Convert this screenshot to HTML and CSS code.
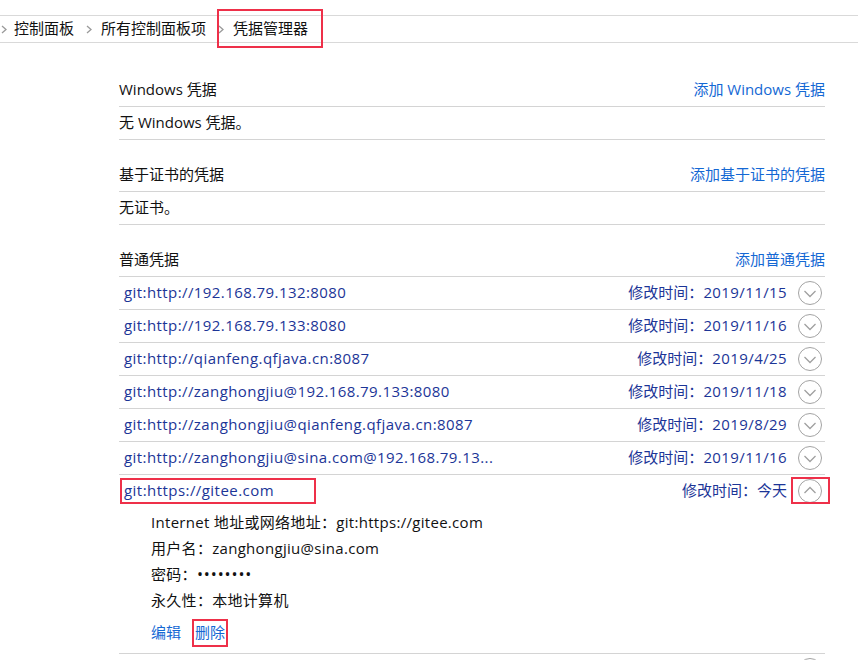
FILE: index.html
```html
<!DOCTYPE html>
<html lang="zh-CN">
<head>
<meta charset="utf-8">
<title>凭据管理器</title>
<link rel="stylesheet" href="styles.css">
</head>
<body>
<nav class="crumbs">
  <svg class="sep first" viewBox="0 0 6 9" width="6" height="9"><path d="M1 1 L5 4.5 L1 8" /></svg>
  <span class="crumb">控制面板</span>
  <svg class="sep" viewBox="0 0 6 9" width="6" height="9"><path d="M1 1 L5 4.5 L1 8" /></svg>
  <span class="crumb">所有控制面板项</span>
  <svg class="sep" viewBox="0 0 6 9" width="6" height="9"><path d="M1 1 L5 4.5 L1 8" /></svg>
  <span class="crumb current">凭据管理器</span>
</nav>

<main class="main">
  <section class="section">
    <div class="sec-head"><span class="txt">Windows 凭据</span><a class="link txt">添加 Windows 凭据</a></div>
    <div class="sec-empty"><span class="txt">无 Windows 凭据。</span></div>
  </section>

  <section class="section">
    <div class="sec-head"><span class="txt">基于证书的凭据</span><a class="link txt">添加基于证书的凭据</a></div>
    <div class="sec-empty"><span class="txt">无证书。</span></div>
  </section>

  <section class="section">
    <div class="sec-head"><span class="txt">普通凭据</span><a class="link txt">添加普通凭据</a></div>

    <div class="cred">
      <div class="cred-head"><span class="cred-name txt">git:http://192.168.79.132:8080</span><span class="cred-date txt">修改时间：<span class="num">2019/11/15</span></span><svg class="toggle" viewBox="0 0 24 24"><circle cx="12" cy="12" r="11.5"/><path d="M6.5 10 L12 15.5 L17.5 10"/></svg></div>
    </div>
    <div class="cred">
      <div class="cred-head"><span class="cred-name txt">git:http://192.168.79.133:8080</span><span class="cred-date txt">修改时间：<span class="num">2019/11/16</span></span><svg class="toggle" viewBox="0 0 24 24"><circle cx="12" cy="12" r="11.5"/><path d="M6.5 10 L12 15.5 L17.5 10"/></svg></div>
    </div>
    <div class="cred">
      <div class="cred-head"><span class="cred-name txt">git:http://qianfeng.qfjava.cn:8087</span><span class="cred-date txt">修改时间：<span class="num">2019/4/25</span></span><svg class="toggle" viewBox="0 0 24 24"><circle cx="12" cy="12" r="11.5"/><path d="M6.5 10 L12 15.5 L17.5 10"/></svg></div>
    </div>
    <div class="cred">
      <div class="cred-head"><span class="cred-name txt">git:http://zanghongjiu@192.168.79.133:8080</span><span class="cred-date txt">修改时间：<span class="num">2019/11/18</span></span><svg class="toggle" viewBox="0 0 24 24"><circle cx="12" cy="12" r="11.5"/><path d="M6.5 10 L12 15.5 L17.5 10"/></svg></div>
    </div>
    <div class="cred">
      <div class="cred-head"><span class="cred-name txt">git:http://zanghongjiu@qianfeng.qfjava.cn:8087</span><span class="cred-date txt">修改时间：<span class="num">2019/8/29</span></span><svg class="toggle" viewBox="0 0 24 24"><circle cx="12" cy="12" r="11.5"/><path d="M6.5 10 L12 15.5 L17.5 10"/></svg></div>
    </div>
    <div class="cred">
      <div class="cred-head"><span class="cred-name txt">git:http://zanghongjiu@sina.com@192.168.79.13...</span><span class="cred-date txt">修改时间：<span class="num">2019/11/16</span></span><svg class="toggle" viewBox="0 0 24 24"><circle cx="12" cy="12" r="11.5"/><path d="M6.5 10 L12 15.5 L17.5 10"/></svg></div>
    </div>

    <div class="cred open">
      <div class="cred-head"><span class="cred-name"><span class="name-box">git:https://gitee.com</span></span><span class="cred-date txt">修改时间：今天</span><span class="toggle-wrap"><svg class="toggle" viewBox="0 0 24 24"><circle cx="12" cy="12" r="11.5"/><path d="M6.5 14 L12 8.5 L17.5 14"/></svg></span></div>
      <div class="details">
        <div>Internet 地址或网络地址：git:https://gitee.com</div>
        <div>用户名：zanghongjiu@sina.com</div>
        <div>密码：<span class="dots">••••••••</span></div>
        <div>永久性：本地计算机</div>
        <div class="actions"><a class="link">编辑</a><a class="link marked">删除</a></div>
      </div>
    </div>

    <div class="cred">
      <div class="cred-head"><span class="cred-name"></span><svg class="toggle" viewBox="0 0 24 24"><circle cx="12" cy="12" r="11.5"/><path d="M6.5 10 L12 15.5 L17.5 10"/></svg></div>
    </div>
  </section>
</main>
</body>
</html>
```

FILE: styles.css
```css
html, body {
  margin: 0;
  padding: 0;
  background: #ffffff;
}

body {
  font-family: "Open Sans", "Noto Sans CJK SC", sans-serif;
  font-size: 15px;
  color: #111111;
  overflow: hidden;
}

.crumbs {
  margin-top: 15px;
  height: 26px;
  border-top: 1px solid #d9d9d9;
  border-bottom: 1px solid #d9d9d9;
  display: flex;
  align-items: center;
}

.crumbs .sep {
  flex: none;
  margin: 0 9px 0 12px;
}

.crumbs .sep.first {
  margin: 0 7px 0 1px;
}

.crumbs .sep path {
  fill: none;
  stroke: #9a9a9a;
  stroke-width: 1.3;
}

.crumb {
  line-height: 24px;
  padding-bottom: 2px;
  white-space: nowrap;
}

.crumb.current {
  position: relative;
}

.crumb.current::after {
  content: "";
  position: absolute;
  left: -16px;
  right: -15px;
  top: -7px;
  bottom: -6px;
  border: 2px solid #ee3049;
}

.main {
  margin-left: 119px;
  width: 706px;
  padding-top: 31px;
}

.section + .section {
  margin-top: 19px;
}

.sec-head {
  display: flex;
  justify-content: space-between;
  align-items: center;
  height: 32px;
  border-bottom: 1px solid #d4d4d4;
}

.sec-empty {
  display: flex;
  align-items: center;
  height: 32px;
  border-bottom: 1px solid #d4d4d4;
}

.txt {
  line-height: 30px;
  padding-bottom: 2px;
}

.link {
  color: #1468d4;
  text-decoration: none;
}

.cred {
  border-bottom: 1px solid #d4d4d4;
}

.cred-head {
  display: flex;
  align-items: center;
  height: 32px;
  padding: 0 3px 0 5px;
}

.cred-name {
  flex: 1;
  color: #1c3597;
  white-space: nowrap;
  letter-spacing: 0.42px;
}

.cred-date {
  color: #1c3597;
  margin-right: 11px;
  white-space: nowrap;
}

.num {
  letter-spacing: 0.4px;
}

.toggle {
  width: 24px;
  height: 24px;
  flex: none;
  display: block;
}

.toggle circle {
  fill: none;
  stroke: #a3a3a3;
  stroke-width: 1;
}

.toggle path {
  fill: none;
  stroke: #a0a0a0;
  stroke-width: 1.3;
}

.cred.open .cred-head {
  padding-left: 1px;
}

.name-box {
  display: inline-block;
  box-sizing: border-box;
  width: 196px;
  height: 26px;
  line-height: 21px;
  padding: 0 2px;
  border: 2px solid #ee3049;
  letter-spacing: 0.45px;
}

.toggle-wrap {
  position: relative;
  flex: none;
}

.toggle-wrap::after {
  content: "";
  position: absolute;
  left: -7px;
  right: -8px;
  top: -2px;
  bottom: -1px;
  border: 2px solid #ee3049;
}

.details {
  padding: 2px 0 8px 32px;
  line-height: 26px;
  letter-spacing: 0.3px;
}

.dots {
  font-size: 16px;
  letter-spacing: 0.9px;
}

.actions {
  margin-top: 6px;
  display: flex;
  gap: 14px;
  letter-spacing: 0;
}

.marked {
  position: relative;
}

.marked::after {
  content: "";
  position: absolute;
  left: -3px;
  right: -3px;
  top: 0;
  bottom: -2px;
  border: 2px solid #ee3049;
}
```
